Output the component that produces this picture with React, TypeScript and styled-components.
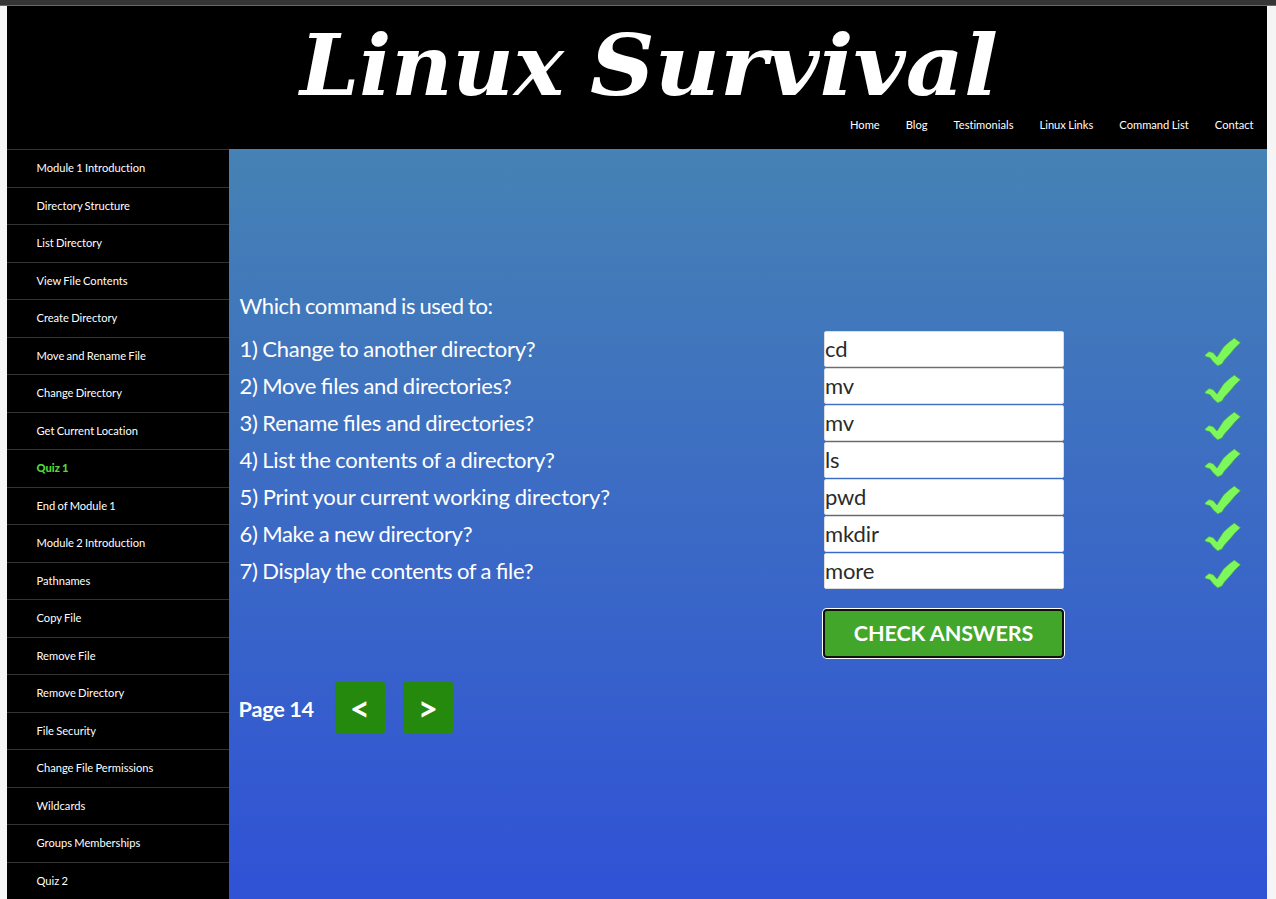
import React from 'react';
import styled, { createGlobalStyle } from 'styled-components';

const GlobalStyle = createGlobalStyle`
  * { box-sizing: border-box; }
  html, body { margin: 0; height: 100%; overflow: hidden; }
  body { background: #f5f5f5; color: #fff; font-family: Lato, sans-serif; }
`;

const TopStrip = styled.div`
  height: 6px;
  background: #353535;
  border-bottom: 1px solid #686868;
`;

const Page = styled.div`
  margin: 0 9px 0 7px;
  height: 893px;
  display: flex;
  flex-direction: column;
  background: #000;
  overflow: hidden;
`;

const Header = styled.header`
  height: 143px;
  flex: none;
  display: flex;
  flex-direction: column;
  align-items: center;
`;

const Wordmark = styled.svg`
  display: block;
  width: 760px;
  height: 111px;
  margin-left: 20px;
  fill: #fff;
  font-family: 'DejaVu Serif', serif;
  font-style: italic;
  font-weight: 700;
  font-size: 84px;
`;

const Nav = styled.nav`
  align-self: flex-end;
  display: flex;
  gap: 26px;
  padding: 0 13.5px 0 0;
`;

const NavLink = styled.a`
  font-size: 11.15px;
  line-height: 16px;
  word-spacing: -0.5px;
  font-variant-ligatures: none;
`;

const Body = styled.div`
  flex: 1;
  display: flex;
  min-height: 0;
`;

const Sidebar = styled.aside`
  width: 222px;
  flex: none;
`;

const SideItem = styled.a<{ $active?: boolean }>`
  display: block;
  height: 37.5px;
  border-top: 1px solid #333;
  padding: 9px 0 0 29.5px;
  font-size: 11.15px;
  line-height: 17px;
  word-spacing: -0.6px;
  font-variant-ligatures: none;
  font-weight: ${p => (p.$active ? 900 : 400)};
  color: ${p => (p.$active ? '#55d737' : '#fff')};
`;

const Main = styled.main`
  flex: 1;
  padding: 141px 0 0 10.5px;
  font-size: 22px;
  background: linear-gradient(#4682b4, #3052d6);
`;

const Prompt = styled.p`
  margin: 0;
  height: 41px;
  line-height: 32px;
  letter-spacing: -0.4px;
  word-spacing: -0.8px;
`;

const QuizRow = styled.div`
  display: grid;
  grid-template-columns: 584.5px 240px 1fr;
  height: 37px;
  line-height: 36px;
`;

const Question = styled.span<{ $tracking: number }>`
  letter-spacing: ${p => p.$tracking}px;
  word-spacing: -0.7px;
  font-feature-settings: 'liga' 1;
`;

const Answer = styled.input`
  width: 240px;
  height: 36px;
  padding: 0 0 2px;
  border: 1px solid #dcdcdc;
  border-radius: 2px;
  background: #fff;
  color: #2b2b2b;
  font: 22px Lato, sans-serif;
  letter-spacing: -0.1px;
`;

const Tick = styled.svg`
  display: block;
  width: 38px;
  height: 30px;
  margin: 6px 0 0 140px;
  fill: #7cf85a;
  stroke: #4b9b55;
  stroke-width: 0.7;
`;

const CheckButton = styled.button`
  display: block;
  width: 237px;
  height: 45px;
  margin: 21px 0 0 585.5px;
  padding: 0 0 2px;
  border: 0;
  border-radius: 2px;
  background: #41a62a;
  color: #fff;
  font: 700 21.6px Lato, sans-serif;
  letter-spacing: -0.1px;
  box-shadow: 0 0 0 2px #101010, 0 0 0 3px #fff;
`;

const Pager = styled.div`
  display: flex;
  align-items: center;
  margin-top: 26px;
  font-weight: 700;
`;

const PageLabel = styled.span`
  width: 96.5px;
  margin-left: -1px;
  padding-top: 3px;
  font-size: 21.7px;
  letter-spacing: -0.2px;
  word-spacing: -0.5px;
`;

const PagerButton = styled.button`
  width: 50px;
  height: 51px;
  margin-right: 18px;
  padding: 0;
  border: 0;
  border-radius: 2px;
  background: #24890d;
  color: #fff;
  font: 700 35px/51px Lato, sans-serif;
`;

const links = ['Home', 'Blog', 'Testimonials', 'Linux Links', 'Command List', 'Contact'];

const modules = [
  'Module 1 Introduction', 'Directory Structure', 'List Directory', 'View File Contents',
  'Create Directory', 'Move and Rename File', 'Change Directory', 'Get Current Location',
  'Quiz 1', 'End of Module 1', 'Module 2 Introduction', 'Pathnames', 'Copy File',
  'Remove File', 'Remove Directory', 'File Security', 'Change File Permissions',
  'Wildcards', 'Groups Memberships', 'Quiz 2',
];

const questions = [
  { text: 'Change to another directory?', answer: 'cd', tracking: -0.24 },
  { text: 'Move files and directories?', answer: 'mv', tracking: -0.26 },
  { text: 'Rename files and directories?', answer: 'mv', tracking: -0.25 },
  { text: 'List the contents of a directory?', answer: 'ls', tracking: -0.28 },
  { text: 'Print your current working directory?', answer: 'pwd', tracking: -0.15 },
  { text: 'Make a new directory?', answer: 'mkdir', tracking: -0.3 },
  { text: 'Display the contents of a file?', answer: 'more', tracking: -0.29 },
];

export default function App() {
  return (
    <>
      <GlobalStyle />
      <TopStrip />
      <Page>
        <Header>
          <Wordmark viewBox="0 0 760 111" aria-label="Linux Survival">
            <text x="33" y="89" textLength="264" lengthAdjust="spacingAndGlyphs">Linux</text>
            <text x="323" y="89" textLength="408" lengthAdjust="spacingAndGlyphs">Survival</text>
          </Wordmark>
          <Nav>{links.map(l => <NavLink key={l}>{l}</NavLink>)}</Nav>
        </Header>
        <Body>
          <Sidebar>
            {modules.map(m => <SideItem key={m} $active={m === 'Quiz 1'}>{m}</SideItem>)}
          </Sidebar>
          <Main>
            <Prompt>Which command is used to:</Prompt>
            {questions.map((q, i) => (
              <QuizRow key={q.text}>
                <Question $tracking={q.tracking}>{i + 1}) {q.text}</Question>
                <Answer defaultValue={q.answer} />
                <Tick viewBox="0 0 38 30">
                  <path d="M0.800 18 L5 14.500 L9 15.500 L13 20 L19.500 10 L25 5 L30.300 1 L36.500 5.700 L31 11 L26 17 L20.500 23 L18 27 L13.700 29 L9.300 25 L6 20.800 L1.500 19.500 Z" />
                </Tick>
              </QuizRow>
            ))}
            <CheckButton>CHECK ANSWERS</CheckButton>
            <Pager>
              <PageLabel>Page 14</PageLabel>
              <PagerButton>&lt;</PagerButton>
              <PagerButton>&gt;</PagerButton>
            </Pager>
          </Main>
        </Body>
      </Page>
    </>
  );
}
